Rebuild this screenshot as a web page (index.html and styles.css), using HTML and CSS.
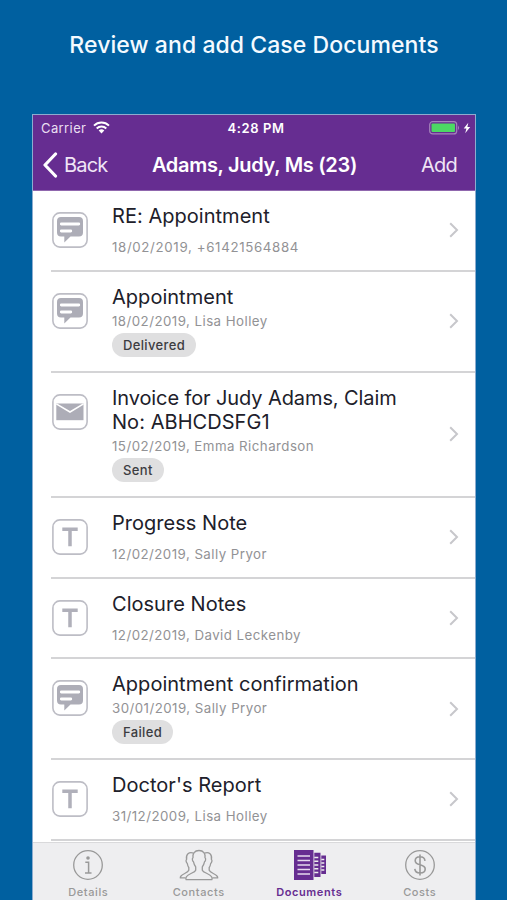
FILE: index.html
```html
<!DOCTYPE html>
<html lang="en">
<head>
<meta charset="utf-8">
<title>Case Documents</title>
<link rel="stylesheet" href="styles.css">
</head>
<body>
<svg width="0" height="0" class="defs" aria-hidden="true">
  <symbol id="chat" viewBox="0 0 36 36">
    <rect x=".9" y=".9" width="34.200" height="34.200" rx="7" fill="#fff" stroke="#bdbdc5" stroke-width="1.600"/>
    <path d="M9 5h18a4 4 0 0 1 4 4v11.500a4 4 0 0 1-4 4H18.500l-6.200 6v-6H9a4 4 0 0 1-4-4V9a4 4 0 0 1 4-4z" fill="#adadb7"/>
    <path d="M9.300 12h17.500M9.300 19h9.500" stroke="#fff" stroke-width="2.800" stroke-linecap="round"/>
  </symbol>
  <symbol id="mail" viewBox="0 0 36 36">
    <rect x=".9" y=".9" width="34.200" height="34.200" rx="7" fill="#fff" stroke="#bdbdc5" stroke-width="1.600"/>
    <path d="M4.300 9.500h27.200v16.700H4.300z" fill="#adadb7"/>
    <path d="M4.300 9.800 18 18l13.500-8.200" fill="none" stroke="#fff" stroke-width="1.500"/>
  </symbol>
  <symbol id="note" viewBox="0 0 36 36">
    <rect x=".9" y=".9" width="34.200" height="34.200" rx="7" fill="#fff" stroke="#bdbdc5" stroke-width="1.600"/>
    <path d="M10.300 10.200h15.400M18 10.200V27.300" fill="none" stroke="#b0b0ba" stroke-width="3.500"/>
  </symbol>
  <symbol id="next" viewBox="0 0 10 16"><path d="m1.200 1.200 6.800 6.800-6.800 6.800" fill="none" stroke="#c7c7cb" stroke-width="2"/></symbol>
</svg>
<h1 class="headline"><span>Review and add Case Documents</span></h1>
<main class="phone">
  <header class="top">
    <div class="status">
      <div class="carrier"><span>Carrier</span>
        <svg width="17" height="13" viewBox="0 0 17 13"><g fill="none" stroke="#fff" stroke-width="2"><path d="M1 4.600a10.700 10.700 0 0 1 15 0M3.700 7.500a6.900 6.900 0 0 1 9.600 0"/></g><path d="M5.700 9.500a4 4 0 0 1 5.600 0L8.500 12.400z" fill="#fff"/></svg>
      </div>
      <span class="clock">4:28 PM</span>
      <svg class="battery" width="42" height="14" viewBox="0 0 42 14"><rect x=".7" y=".7" width="27" height="12.200" rx="3" fill="none" stroke="#a583bb" stroke-width="1.200"/><rect x="2.500" y="2.500" width="23.500" height="8.600" rx="1" fill="#4cd964"/><path d="M29 4.500q2 2.300 0 4.600z" fill="#a583bb"/><path d="m39.300 1.700-4.600 5.800h2.700l-1.200 4.800 5-6.200h-2.800z" fill="#fff"/></svg>
    </div>
    <nav class="nav">
      <a class="back"><svg width="16" height="26" viewBox="0 0 16 26"><path d="M13.500 2 3 13l10.500 11" fill="none" stroke="#fff" stroke-width="3.200" stroke-linecap="round" stroke-linejoin="round"/></svg><span>Back</span></a>
      <strong class="name">Adams, Judy, Ms (23)</strong>
      <a class="add">Add</a>
    </nav>
  </header>
  <ul class="list">
    <li class="row"><svg class="kind"><use href="#chat"/></svg><div class="text"><h2>RE: Appointment</h2><p class="gap phone-no">18/02/2019, +61421564884</p></div><svg class="next"><use href="#next"/></svg></li>
    <li class="row tagged"><svg class="kind"><use href="#chat"/></svg><div class="text"><h2>Appointment</h2><p>18/02/2019, Lisa Holley</p><span class="tag">Delivered</span></div><svg class="next"><use href="#next"/></svg></li>
    <li class="row double"><svg class="kind"><use href="#mail"/></svg><div class="text"><h2 class="long">Invoice for Judy Adams, Claim<br><span class="claim">No: ABHCDSFG1</span></h2><p>15/02/2019, Emma Richardson</p><span class="tag">Sent</span></div><svg class="next"><use href="#next"/></svg></li>
    <li class="row"><svg class="kind"><use href="#note"/></svg><div class="text"><h2>Progress Note</h2><p class="gap">12/02/2019, Sally Pryor</p></div><svg class="next"><use href="#next"/></svg></li>
    <li class="row"><svg class="kind"><use href="#note"/></svg><div class="text"><h2>Closure Notes</h2><p class="gap">12/02/2019, David Leckenby</p></div><svg class="next"><use href="#next"/></svg></li>
    <li class="row tagged"><svg class="kind"><use href="#chat"/></svg><div class="text"><h2>Appointment confirmation</h2><p>30/01/2019, Sally Pryor</p><span class="tag">Failed</span></div><svg class="next"><use href="#next"/></svg></li>
    <li class="row"><svg class="kind"><use href="#note"/></svg><div class="text"><h2>Doctor's Report</h2><p class="gap">31/12/2009, Lisa Holley</p></div><svg class="next"><use href="#next"/></svg></li>
  </ul>
  <footer class="tabs">
    <a class="tab"><svg width="32" height="32" viewBox="0 0 32 32"><circle cx="16" cy="16" r="14.300" fill="none" stroke="#999" stroke-width="1.300"/><circle cx="16" cy="9" r="1.800" fill="#999"/><path d="M13.300 13.300h3.300v10.500M13 24h6.500" fill="none" stroke="#999" stroke-width="1.500"/></svg><span>Details</span></a>
    <a class="tab"><svg width="40" height="32" viewBox="0 0 40 32"><g fill="none" stroke="#999" stroke-width="1.300" stroke-linejoin="round"><path d="M20 1.500c-4.500 0-6.600 3-6 7.300-1.200.8-.5 3.300.5 4 .4 2.300 1.400 3.800 2.200 5v3.400c-1 2.800-7.500 3.300-9.300 6.600-.5 1-.6 2.400-.3 2.900h25.800c.3-.5.2-1.900-.3-2.900-1.800-3.300-8.300-3.800-9.300-6.600v-3.400c.8-1.200 1.800-2.700 2.200-5 1-.7 1.700-3.200.5-4C26.600 4.500 24.500 1.500 20 1.500z"/><path d="M14.500 4.200C10 2.500 6.600 5.500 7.600 10.500c-1.200.8-.2 3.300.7 4 .3 2 .8 3.100 1.500 4v2.800c-1 2.800-6 3.300-7.800 5.700-.4.500-.8 1.200-.7 1.800h5.300"/><path d="M25.500 4.200c4.500-1.700 7.900 1.300 6.900 6.300 1.200.8.200 3.300-.7 4-.3 2-.8 3.100-1.500 4v2.800c1 2.800 6 3.300 7.800 5.700.4.500.8 1.200.7 1.800h-5.300"/></g></svg><span>Contacts</span></a>
    <a class="tab on"><svg width="34" height="32" viewBox="0 0 34 32"><g fill="#662d91"><path d="M1 1h19.500v30H1zM21.300 3.700h6.200v24.300h-6.200zM28.300 6.400H33v18.700h-4.700z"/></g><path d="M4.500 7h12.500M4.500 11.500h12.500M4.500 16h12.500M4.500 20.500h12.500M4.500 25h12.500" stroke="#e5d9ed" stroke-width="1.400"/><path d="M21.300 8.500h4M21.300 12.300h4M21.300 16h4M21.300 19.700h4M21.300 23.500h4M28.300 10.500h3M28.300 14h3M28.300 17.500h3M28.300 21h3" stroke="#eee" stroke-width="1.500"/></svg><span>Documents</span></a>
    <a class="tab"><svg width="32" height="32" viewBox="0 0 32 32"><g fill="none" stroke="#999" stroke-width="1.300"><circle cx="16" cy="16" r="14.300"/><path d="M21 11.800c-.3-2.700-2.200-4-5-4s-4.800 1.500-4.800 3.900c0 5.500 10 2.700 10 8.300 0 2.500-2.200 4-5.100 4-3 0-5-1.500-5.300-4.200M16 5.500v21" stroke-width="1.600"/></g></svg><span>Costs</span></a>
  </footer>
</main>
</body>
</html>
```
FILE: styles.css
```css
* { box-sizing: border-box; margin: 0; padding: 0; }
body { width: 507px; height: 900px; overflow: hidden; background: #0060a0; font-family: Inter, "Liberation Sans", sans-serif; display: flex; flex-direction: column; }
.defs { position: absolute; }
.headline { height: 114px; flex: none; padding: 31px 0 0 1px; text-align: center; font-size: 23px; line-height: 29px; font-weight: 500; letter-spacing: .07px; color: #f4faff; white-space: nowrap; }
.phone { width: 444px; height: 786px; margin-left: 32px; border: 1px solid #8caccf; background: #fff; display: flex; flex-direction: column; flex: none; }
.top { height: 76px; flex: none; background: #662d91; border-bottom: 1px solid #9067ae; color: #fff; }
.status { height: 25px; display: grid; grid-template-columns: 1fr auto 1fr; align-items: center; padding: 0 4px 0 8px; font-size: 13px; }
.carrier { display: flex; align-items: center; gap: 7px; color: #eadff1; letter-spacing: .4px; }
.clock { font-weight: 600; letter-spacing: .6px; }
.battery { justify-self: end; }
.nav { height: 50px; display: grid; grid-template-columns: 1fr auto 1fr; align-items: center; padding: 0 18px 0 9px; font-size: 20px; }
.back { display: flex; align-items: center; gap: 6px; color: #f0e5f6; letter-spacing: -.8px; }
.name { font-size: 20px; font-weight: 600; letter-spacing: -.3px; padding-left: 10px; }
.add { justify-self: end; color: #f0e5f6; letter-spacing: -.8px; }
.list { list-style: none; flex: none; }
.row { height: 80.500px; margin-left: 18px; padding-left: 1px; border-bottom: 2px solid #d4d4d6; display: flex; padding-right: 16px; }
.tagged { height: 101px; }
.double { height: 125.500px; }
.kind { width: 36px; height: 36px; margin: 21px 24px 0 0; flex: none; }
.text { flex: 1; padding-top: 13.400px; white-space: nowrap; }
.text h2 { font-size: 20px; line-height: 24px; font-weight: 400; color: #20202a; letter-spacing: 0.03px; }
.text .long { letter-spacing: -.1px; }
.claim { letter-spacing: .05px; }
.text p { font-size: 13.300px; line-height: 18px; margin-top: 3px; color: #929295; letter-spacing: .45px; }
.text .gap { margin-top: 10px; }
.text .phone-no { letter-spacing: .64px; }
.tag { display: inline-block; height: 24px; padding: 0 11px; margin-top: 3px; border-radius: 12px; background: #dfdfe0; color: #3c3c41; font-size: 13px; line-height: 24px; font-weight: 500; letter-spacing: .35px; vertical-align: top; }
.next { width: 10px; height: 16px; align-self: center; flex: none; }
.tabs { flex: 1; margin-top: 1px; border-top: 1px solid #d9d9db; background: #eeeef0; display: grid; grid-template-columns: repeat(4, 1fr); }
.tab { display: flex; flex-direction: column; align-items: center; padding-top: 6px; gap: 3px; font-size: 11px; line-height: 16px; font-weight: 500; letter-spacing: .6px; color: #999; }
.on { color: #662d91; font-weight: 600; }
.on svg { margin-left: 2px; }
```
